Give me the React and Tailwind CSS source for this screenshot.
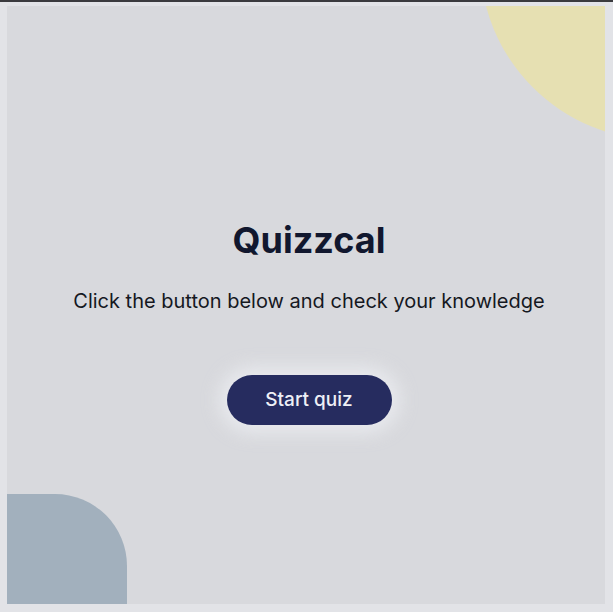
export default function App() {
  return (
    <div className="h-[612px] w-full border-t-2 border-[#3a3a3e] bg-[#e2e3e7] font-['Inter',sans-serif]">
      <div className="relative h-full overflow-hidden border-b-[8px] border-l-[7px] border-r-[8px] border-t-[4px] border-[#e2e3e7] bg-[#d8d9dd]">
        <div className="absolute left-[473px] top-[-226px] h-[360px] w-[360px] rounded-full bg-[#e6e0b2]" />
        <div className="absolute bottom-[-40px] left-[-7px] h-[150px] w-[127px] rounded-tr-[72px] bg-[#a2b0bd]" />

        <main className="relative flex flex-col items-center pl-[6px] pt-[212px]">
          <h1 className="text-[36px] font-bold leading-[44px] text-[#11172e]">Quizzcal</h1>
          <p className="mt-[25px] text-[20px] leading-[28px] text-[#15181f]">
            Click the button below and check your knowledge
          </p>
          <button className="mt-[60px] h-[50px] w-[165px] rounded-full bg-[#262c5f] text-[19px] font-medium text-[#eef0f6] shadow-[0_0_18px_8px_rgba(240,241,245,0.7)]">
            Start quiz
          </button>
        </main>
      </div>
    </div>
  );
}
